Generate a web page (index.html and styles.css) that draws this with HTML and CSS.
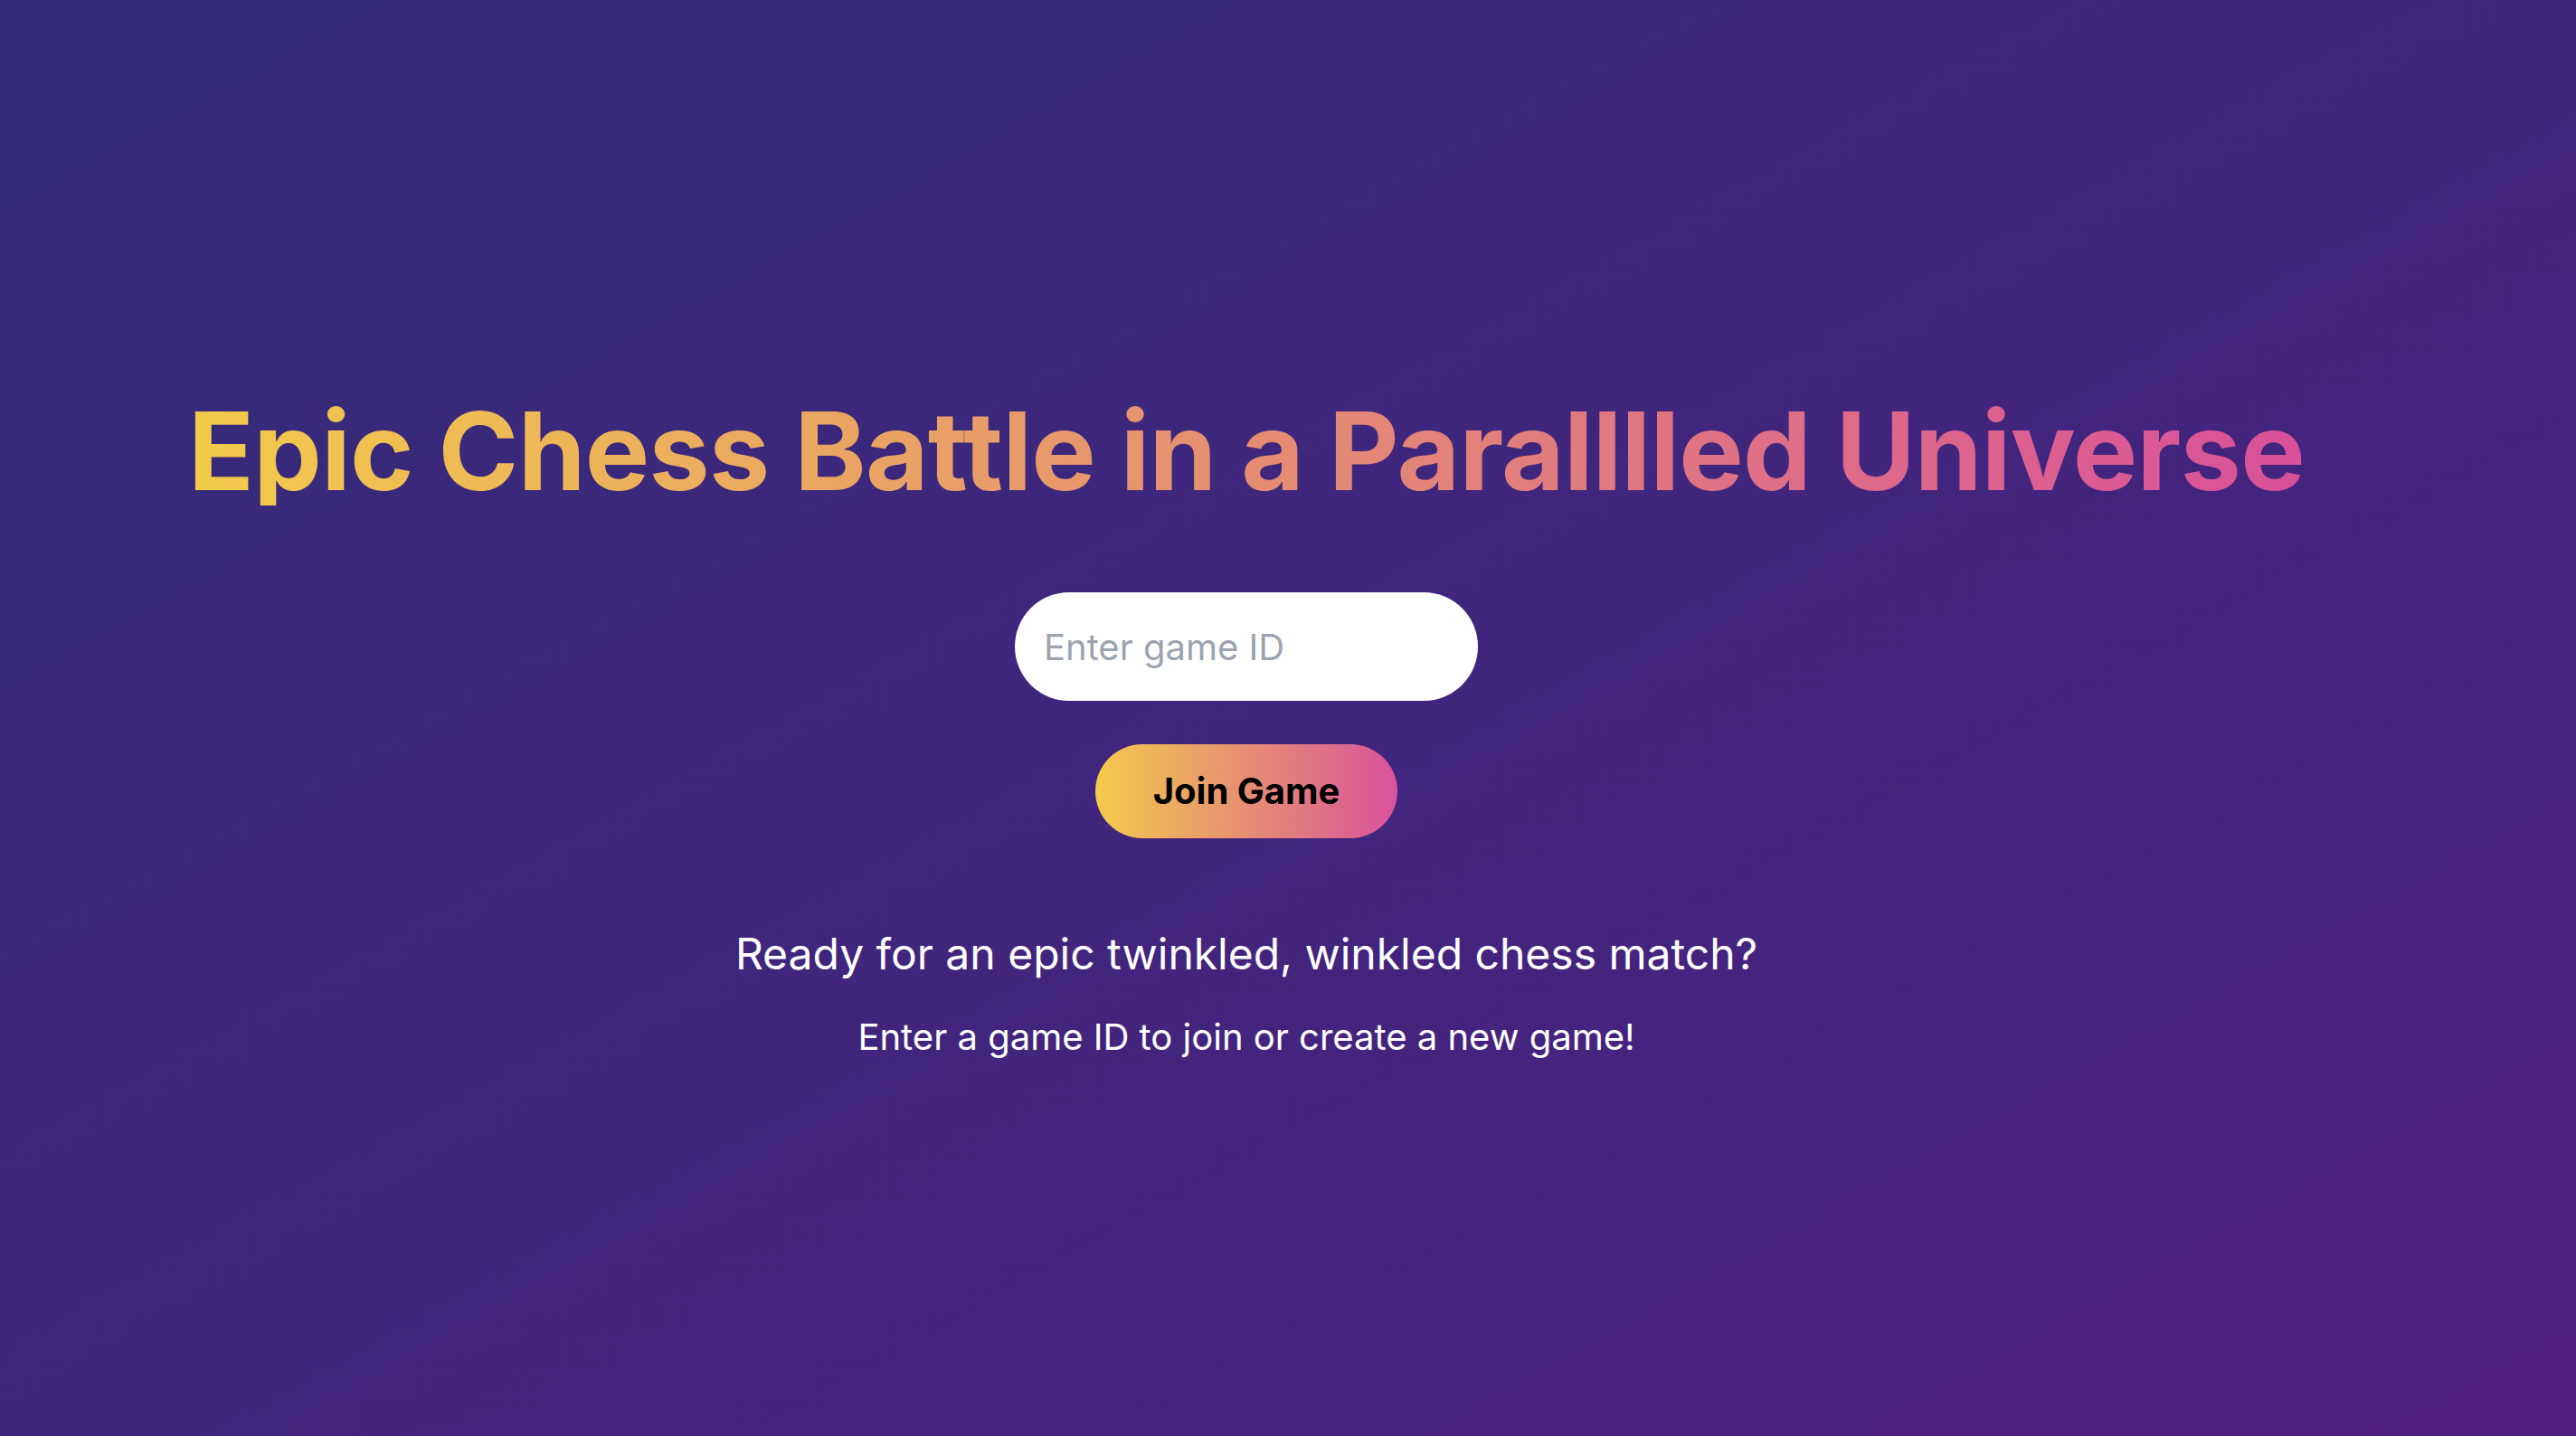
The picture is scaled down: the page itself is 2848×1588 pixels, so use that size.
FILE: index.html
```html
<!DOCTYPE html>
<html lang="en">
<head>
<meta charset="utf-8">
<title>Epic Chess Battle</title>
<link rel="stylesheet" href="styles.css">
</head>
<body>
<main class="page">
  <div class="content">
    <h1 class="title">Epic Chess Battle in a Paralllled Universe</h1>
    <input class="game-input" type="text" placeholder="Enter game ID">
    <button class="join-btn" type="button">Join Game</button>
    <p class="lead">Ready for an epic twinkled, winkled chess match?</p>
    <p class="sub">Enter a game ID to join or create a new game!</p>
  </div>
</main>
</body>
</html>
```

FILE: styles.css
```css
* { box-sizing: border-box; }
html, body { margin: 0; padding: 0; height: 100%; }
body {
  font-family: Inter, "Noto Sans", sans-serif;
  background: linear-gradient(to bottom right, #322c79, #4f1f81);
  min-height: 100vh;
}
.page {
  min-height: 100vh;
  display: flex;
  align-items: center;
  justify-content: center;
  padding-right: 92px;
  padding-top: 26px;
}
.content {
  display: flex;
  flex-direction: column;
  align-items: center;
  text-align: center;
}
.title {
  margin: 0 0 96px;
  font-size: 120px;
  line-height: 120px;
  font-weight: 700;
  letter-spacing: -0.7px;
  background: linear-gradient(to right, #f2cb4a, #d8509a);
  -webkit-background-clip: text;
  background-clip: text;
  color: transparent;
  white-space: nowrap;
}
.game-input {
  width: 512px;
  height: 120px;
  padding: 32px 32px;
  border: none;
  border-radius: 9999px;
  background: #ffffff;
  font-family: Inter, "Noto Sans", sans-serif;
  font-size: 40px;
  line-height: 56px;
  color: #111827;
  outline: none;
  margin: 0 0 48px;
}
.game-input::placeholder { color: #9ca3af; }
.join-btn {
  height: 104px;
  padding: 24px 64px;
  border: none;
  border-radius: 9999px;
  background: linear-gradient(to right, #f3ca4b, #d9529b);
  font-family: Inter, "Noto Sans", sans-serif;
  font-size: 40px;
  line-height: 56px;
  font-weight: 700;
  color: #000000;
  cursor: pointer;
}
.lead {
  margin: 96px 0 32px;
  font-size: 48px;
  line-height: 64px;
  color: #ffffff;
}
.sub {
  margin: 0;
  font-size: 40px;
  line-height: 56px;
  color: #ffffff;
}
```
